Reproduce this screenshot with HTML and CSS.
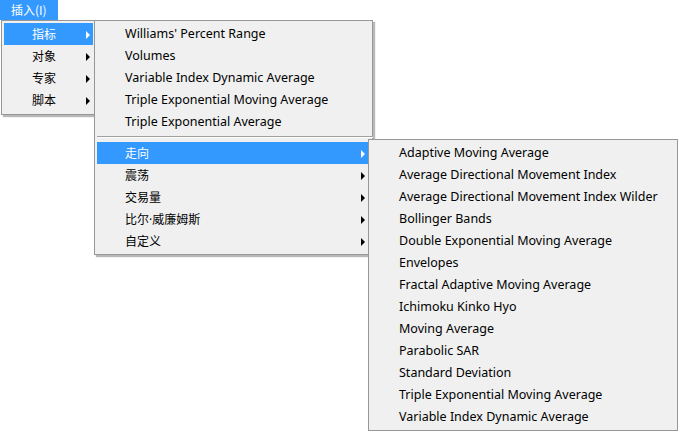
FILE: index.html
```html
<!DOCTYPE html>
<html lang="zh">
<head>
<meta charset="utf-8">
<link rel="stylesheet" href="styles.css">
</head>
<body>
<div class="menubar"><span class="menubar-item">插入(I)</span></div>

<div class="menu m1">
  <div class="item sub active">指标</div>
  <div class="item sub">对象</div>
  <div class="item sub">专家</div>
  <div class="item sub">脚本</div>
</div>

<div class="menu m2">
  <div class="item">Williams' Percent Range</div>
  <div class="item">Volumes</div>
  <div class="item">Variable Index Dynamic Average</div>
  <div class="item">Triple Exponential Moving Average</div>
  <div class="item">Triple Exponential Average</div>
  <div class="sep"></div>
  <div class="item sub active">走向</div>
  <div class="item sub">震荡</div>
  <div class="item sub">交易量</div>
  <div class="item sub">比尔·威廉姆斯</div>
  <div class="item sub">自定义</div>
</div>

<div class="menu m3">
  <div class="item">Adaptive Moving Average</div>
  <div class="item">Average Directional Movement Index</div>
  <div class="item">Average Directional Movement Index Wilder</div>
  <div class="item">Bollinger Bands</div>
  <div class="item">Double Exponential Moving Average</div>
  <div class="item">Envelopes</div>
  <div class="item">Fractal Adaptive Moving Average</div>
  <div class="item">Ichimoku Kinko Hyo</div>
  <div class="item">Moving Average</div>
  <div class="item">Parabolic SAR</div>
  <div class="item">Standard Deviation</div>
  <div class="item">Triple Exponential Moving Average</div>
  <div class="item">Variable Index Dynamic Average</div>
</div>
</body>
</html>
```

FILE: styles.css
```css
html, body {
  margin: 0;
  padding: 0;
  background: #ffffff;
  width: 678px;
  height: 431px;
  overflow: hidden;
  font-family: "Noto Sans", "Noto Sans CJK SC", sans-serif;
  font-size: 12.5px;
  color: #000;
}

.menubar {
  height: 20px;
  display: flex;
}

.menubar-item {
  background: #3399ff;
  color: #fff;
  width: 58px;
  height: 20px;
  line-height: 20px;
  padding-left: 11px;
  box-sizing: border-box;
  font-family: "Noto Sans CJK SC", sans-serif;
  font-size: 12px;
}

.menu {
  position: absolute;
  background: #f0f0f0;
  border: 1px solid #979797;
  box-sizing: border-box;
  padding: 1px 1px 2px 2px;
  box-shadow: 2px 2px 1px rgba(0, 0, 0, 0.28);
}

.m1 {
  left: 1px;
  top: 20px;
  width: 94px;
  height: 95px;
  padding-top: 2px;
  z-index: 1;
}

.m2 {
  left: 94px;
  top: 20px;
  width: 279px;
  height: 235px;
  z-index: 2;
}

.m3 {
  left: 368px;
  top: 139px;
  width: 310px;
  height: 292px;
  padding-top: 1px;
  z-index: 3;
  box-shadow: none;
}

.item {
  position: relative;
  height: 21px;
  padding-top: 1px;
  line-height: 22px;
  padding-left: 28px;
  white-space: nowrap;
}

.m1 .item, .m2 .sub {
  font-family: "Noto Sans", "Noto Sans CJK SC", sans-serif;
  font-size: 12px;
}

.item.active {
  background: #3399ff;
  color: #fff;
}

.sub::after {
  content: "";
  position: absolute;
  top: 8px;
  right: 3px;
  width: 0;
  height: 0;
  border-top: 4px solid transparent;
  border-bottom: 4px solid transparent;
  border-left: 4px solid #000;
}

.m2 .sub::after {
  right: 6px;
}

.sub.active::after {
  border-left-color: #fff;
}

.sep {
  height: 10px;
  display: flex;
  align-items: center;
}

.sep::before {
  content: "";
  flex: 1;
  height: 1px;
  background: #a0a0a0;
  border-bottom: 1px solid #ffffff;
  margin-right: -2px;
}
```
